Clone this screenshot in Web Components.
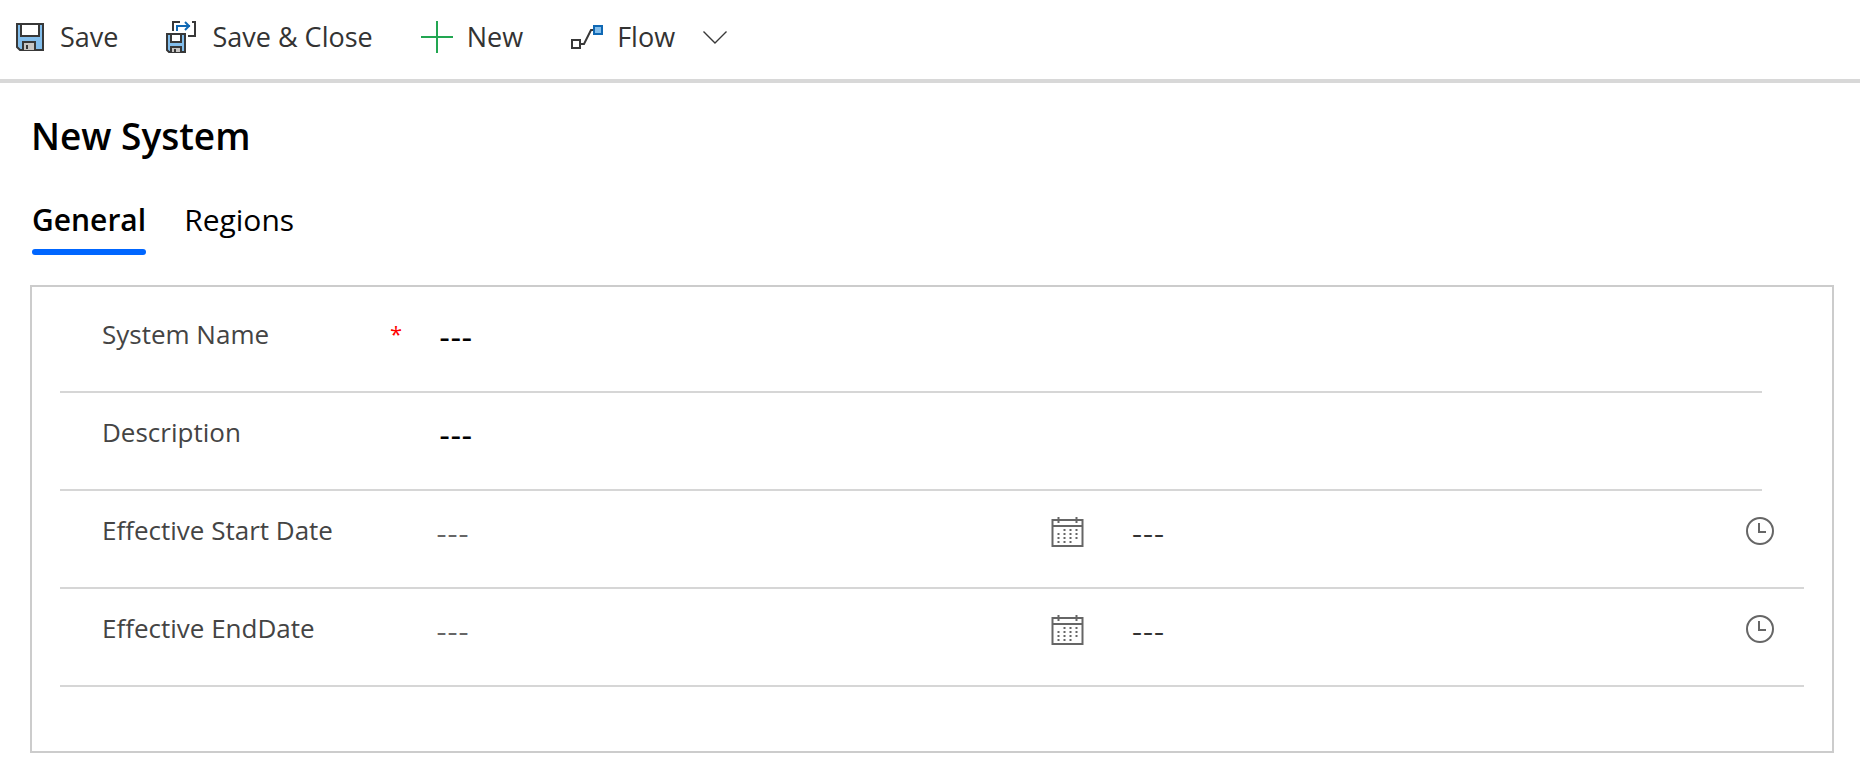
<!DOCTYPE html>
<html lang="en">
<head>
<meta charset="utf-8">
<meta name="viewport" content="width=device-width, initial-scale=1">
<title>New System</title>
<style>
	body {
		margin: 0;
		background: #fff;
		color: #000;
		font-family: "Open Sans", "Noto Sans", sans-serif;
		font-size: 26px;
		line-height: 38px;
	}
	main { padding: 30px 26px 24px 30px; }
	h1 {
		margin: 0;
		padding-left: 1px;
		font-size: 37px;
		font-weight: 600;
		line-height: 46px;
	}
</style>
</head>
<body>
	<command-bar>
		<command-button icon="save">Save</command-button>
		<command-button icon="saveClose">Save &amp; Close</command-button>
		<command-button icon="plus">New</command-button>
		<command-button icon="flow" menu>Flow</command-button>
	</command-bar>
	<main>
		<h1>New System</h1>
		<form-tabs>
			<form-tab selected>General</form-tab>
			<form-tab>Regions</form-tab>
		</form-tabs>
		<form-section>
			<text-field label="System Name" value="---" required></text-field>
			<text-field label="Description" value="---"></text-field>
			<date-time-field label="Effective Start Date" date="---" time="---"></date-time-field>
			<date-time-field label="Effective EndDate" date="---" time="---"></date-time-field>
		</form-section>
	</main>

<script>
const icons = {
	save: `
		<svg width="32" height="32" viewBox="0 0 32 32" fill="none" stroke="#383838" stroke-width="2" aria-hidden="true">
			<path fill="#83beec" d="M3 3H29V29H6L3 26Z"/>
			<path fill="#fff" d="M7 3H25V15H7Z"/>
			<path fill="#c8c6c4" d="M9 29V21H21V29"/>
			<path d="M13 24V28"/>
		</svg>`,
	saveClose: `
		<svg width="32" height="32" viewBox="0 0 32 32" fill="none" stroke="#383838" stroke-width="2" aria-hidden="true">
			<path d="M7 10V1H14M26 1H29V15H22"/>
			<path stroke="#0f68b4" d="M11 10V5H24M19 1L23 5L19 9"/>
			<path fill="#83beec" d="M1 13H19V31H3L1 29Z"/>
			<path fill="#fff" d="M5 13H15V21H5Z"/>
			<path fill="#c8c6c4" d="M5 31V26H15V31"/>
			<path d="M9 28V31"/>
		</svg>`,
	plus: `
		<svg width="32" height="32" viewBox="0 0 32 32" fill="none" stroke="#22a651" stroke-width="2" aria-hidden="true">
			<path d="M16 0V32M0 16H32"/>
		</svg>`,
	flow: `
		<svg width="32" height="32" viewBox="0 0 32 32" fill="none" stroke="#383838" stroke-width="2" aria-hidden="true">
			<path d="M1 19H9V27H1ZM10 23H13L20 9H22"/>
			<path fill="#83beec" stroke="#0f68b4" d="M23 5H31V13H23Z"/>
		</svg>`,
	chevron: `
		<svg width="24" height="13" viewBox="0 0 24 13" fill="none" stroke="#383838" stroke-width="1.4" aria-hidden="true">
			<path d="M.5 .5L12 12L23.500 .5"/>
		</svg>`,
	calendar: `
		<svg width="33" height="30" viewBox="0 0 33 30" fill="none" stroke="#666" stroke-width="2" aria-hidden="true">
			<path d="M1.500 3H31.500V29H1.500ZM1 9H32"/>
			<path d="M7.500 0V6M25.500 0V6"/>
			<path stroke-dasharray="2 4" d="M12.500 13H27M6.500 17H27M6.500 21H27M6.500 25H21"/>
		</svg>`,
	clock: `
		<svg width="28" height="28" viewBox="0 0 28 28" fill="none" stroke="#666" stroke-width="2" aria-hidden="true">
			<circle cx="14" cy="14" r="13"/>
			<path d="M13 6V15H20"/>
		</svg>`
};

// label, input and row rules shared by every kind of field
const fieldStyle = `
	:host {
		display: flex;
		align-items: flex-start;
		box-sizing: border-box;
		height: 98px;
		padding: 20px 0 0 42px;
		border-bottom: 2px solid #d6d6d6;
	}
	.caption {
		display: flex;
		flex: 0 0 334px;
		justify-content: space-between;
		box-sizing: border-box;
		padding-right: 34px;
		color: #444;
	}
	.required { color: #f00; font-size: 22px; line-height: 36px; }
	input {
		flex: 1;
		min-width: 0;
		height: 38px;
		margin: 4px 0 0;
		padding: 0;
		border: 0;
		outline: 0;
		background: none;
		color: #333;
		font-family: Inter, "Open Sans", sans-serif;
		font-size: 24px;
	}
`;

customElements.define("command-bar",
	class extends HTMLElement {
		connectedCallback(){
			this.attachShadow({ mode: "open" });
			this.shadowRoot.innerHTML = `
				<style>
					:host {
						display: flex;
						gap: 48px;
						padding: 18px 14px 23px;
						border-bottom: 4px solid #d8d8d8;
						font-size: 27px;
					}
				</style>
				<slot></slot>
			`;
		}
	}
);

customElements.define("command-button",
	class extends HTMLElement {
		connectedCallback(){
			this.attachShadow({ mode: "open" });
			this.shadowRoot.innerHTML = `
				<style>
					:host { display: block; }
					button {
						display: flex;
						align-items: center;
						gap: 14px;
						padding: 0;
						border: 0;
						background: none;
						color: #333;
						font: inherit;
						cursor: pointer;
					}
					.arrow { display: flex; padding-left: 14px; }
				</style>
				<button type="button">
					${icons[this.getAttribute("icon")]}
					<slot></slot>
					${this.hasAttribute("menu") ? `<span class="arrow">${icons.chevron}</span>` : ""}
				</button>
			`;
		}
	}
);

customElements.define("form-tabs",
	class extends HTMLElement {
		connectedCallback(){
			this.attachShadow({ mode: "open" });
			this.shadowRoot.innerHTML = `
				<style>
					:host { display: flex; gap: 38px; padding: 38px 2px 30px; }
				</style>
				<slot></slot>
			`;
			this.setAttribute("role", "tablist");
			this.addEventListener("click", this.select);
		}
		select(e){
			const tab = e.target.closest("form-tab");
			if(!tab) return;
			for(const item of this.children){
				item.toggleAttribute("selected", item === tab);
			}
		}
	}
);

customElements.define("form-tab",
	class extends HTMLElement {
		static observedAttributes = ["selected"];

		connectedCallback(){
			this.attachShadow({ mode: "open" });
			this.shadowRoot.innerHTML = `
				<style>
					:host { display: block; }
					button {
						display: block;
						padding: 0;
						border: 0;
						background: none;
						color: #000;
						font: inherit;
						font-size: 30px;
						line-height: 46px;
						cursor: pointer;
					}
					button::after {
						content: "";
						display: block;
						height: 6px;
						margin-top: 6px;
						border-radius: 3px;
					}
					:host([selected]) button { font-weight: 600; }
					:host([selected]) button::after { background: #06f; }
				</style>
				<button type="button" role="tab"><slot></slot></button>
			`;
			this.attributeChangedCallback();
		}
		attributeChangedCallback(){
			if(!this.shadowRoot) return;
			this.shadowRoot.querySelector("button").setAttribute("aria-selected", this.hasAttribute("selected"));
		}
	}
);

customElements.define("form-section",
	class extends HTMLElement {
		connectedCallback(){
			this.attachShadow({ mode: "open" });
			this.shadowRoot.innerHTML = `
				<style>
					:host {
						display: block;
						padding: 8px 28px 64px;
						border: 2px solid #ccc;
					}
				</style>
				<slot></slot>
			`;
		}
	}
);

customElements.define("text-field",
	class extends HTMLElement {
		connectedCallback(){
			const required = this.hasAttribute("required");
			this.attachShadow({ mode: "open" });
			this.shadowRoot.innerHTML = `
				<style>
					${fieldStyle}
					:host { margin-right: 42px; }
					input { padding-left: 3px; color: #000; font-weight: 600; }
				</style>
				<div class="caption">
					<label for="value">${this.getAttribute("label")}</label>
					${required ? `<span class="required">*</span>` : ""}
				</div>
				<input id="value" type="text" value="${this.getAttribute("value")}" ${required ? "required" : ""}>
			`;
		}
	}
);

customElements.define("date-time-field",
	class extends HTMLElement {
		connectedCallback(){
			const label = this.getAttribute("label");
			this.attachShadow({ mode: "open" });
			this.shadowRoot.innerHTML = `
				<style>
					${fieldStyle}
					:host { padding-right: 30px; }
					button {
						display: flex;
						padding: 6px 0 0;
						border: 0;
						background: none;
						cursor: pointer;
					}
					#date { color: #666; }
					#time { margin-left: 48px; }
				</style>
				<div class="caption"><label for="date">${label}</label></div>
				<input id="date" type="text" value="${this.getAttribute("date")}">
				<button type="button" aria-label="Pick a date">${icons.calendar}</button>
				<input id="time" type="text" value="${this.getAttribute("time")}" aria-label="${label} time">
				<button type="button" aria-label="Pick a time">${icons.clock}</button>
			`;
		}
	}
);
</script>
</body>
</html>
